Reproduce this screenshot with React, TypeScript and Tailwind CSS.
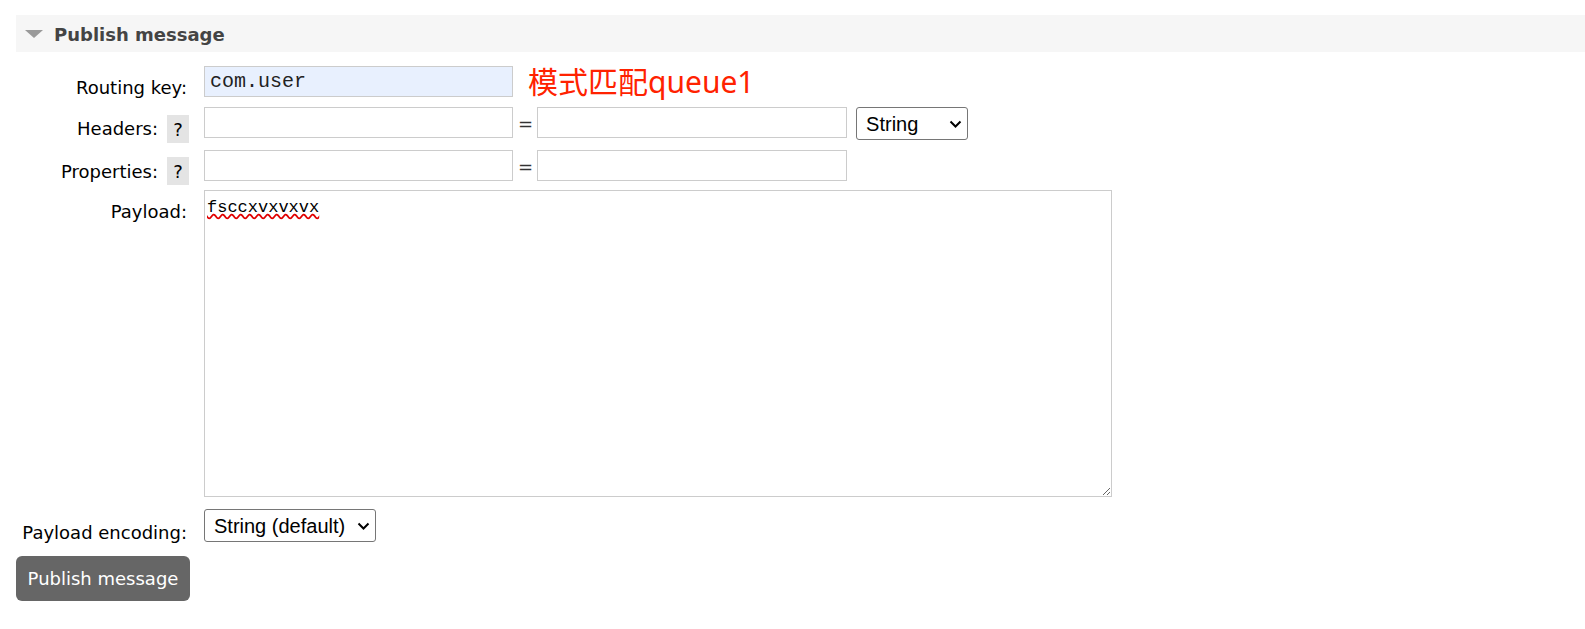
import React from "react";

function Chevron() {
  return (
    <svg width="13" height="8" viewBox="0 0 13 8" className="pointer-events-none absolute right-[6px] top-[13px]">
      <path d="M1.5 1.5 L6.5 6.5 L11.5 1.5" fill="none" stroke="#000" strokeWidth="2" />
    </svg>
  );
}

function Select({ width, options }: { width: string; options: string[] }) {
  return (
    <div className={`relative h-[33px] ${width}`}>
      <select className="h-full w-full appearance-none rounded-[3px] border border-[#767676] bg-white pl-[9px] font-[family-name:'Liberation_Sans',Arial,sans-serif] text-[20px] text-black outline-none">
        {options.map((o) => (
          <option key={o}>{o}</option>
        ))}
      </select>
      <Chevron />
    </div>
  );
}

function Help() {
  return (
    <span className="ml-[9px] mr-[1px] flex h-[28px] w-[22px] items-center justify-center bg-[#e4e4e4] text-black">?</span>
  );
}

export default function App() {
  return (
    <div className="h-[629px] w-[1585px] overflow-hidden bg-white pl-[16px] pt-[15px] font-[family-name:'DejaVu_Sans',Verdana,sans-serif] text-[18px] text-black">
      <div className="flex h-[37px] items-center bg-[#f6f6f6]">
        <svg width="18" height="8" viewBox="0 0 18 8" className="ml-[9px] mt-[1px]">
          <polygon points="0,0 18,0 9,8" fill="#9a9a9a" />
        </svg>
        <span className="ml-[11px] mt-[2px] text-[18px] font-bold text-[#444]">Publish message</span>
      </div>

      <div className="mt-[14px] flex flex-col">
        <div className="flex h-[41px]">
          <div className="w-[174px] pr-[3px] pt-[10px] text-right leading-[24px]">Routing key:</div>
          <input
            className="ml-[14px] h-[31px] w-[309px] border border-[#cccccc] bg-[#e8f0fe] px-[5px] font-[family-name:'Liberation_Mono',monospace] text-[20px] text-[#222] outline-none"
            defaultValue="com.user"
          />
          <span className="ml-[15px] mt-[1px] self-start font-[family-name:'Noto_Sans','Noto_Sans_CJK_SC',sans-serif] text-[30px] leading-[30px] text-[#ff2200]">
            模式匹配queue1
          </span>
        </div>

        <div className="flex h-[43px]">
          <div className="flex w-[174px] items-start justify-end">
            <span className="pt-[10px] leading-[24px]">Headers:</span>
            <span className="mt-[8px]">
              <Help />
            </span>
          </div>
          <input className="ml-[14px] h-[31px] w-[309px] border border-[#cccccc] bg-white outline-none" />
          <span className="ml-[5px] self-start pt-[5px] leading-[24px] text-[#333]">=</span>
          <input className="ml-[4px] h-[31px] w-[310px] border border-[#cccccc] bg-white outline-none" />
          <div className="ml-[9px]">
            <Select width="w-[112px]" options={["String", "Number", "Boolean"]} />
          </div>
        </div>

        <div className="flex h-[40px]">
          <div className="flex w-[174px] items-start justify-end">
            <span className="pt-[10px] leading-[24px]">Properties:</span>
            <span className="mt-[7px]">
              <Help />
            </span>
          </div>
          <input className="ml-[14px] h-[31px] w-[309px] border border-[#cccccc] bg-white outline-none" />
          <span className="ml-[5px] self-start pt-[5px] leading-[24px] text-[#333]">=</span>
          <input className="ml-[4px] h-[31px] w-[310px] border border-[#cccccc] bg-white outline-none" />
        </div>

        <div className="flex h-[319px]">
          <div className="w-[174px] pr-[3px] pt-[10px] text-right leading-[24px]">Payload:</div>
          <textarea
            className="ml-[14px] h-[307px] w-[908px] resize border border-[#cccccc] bg-white px-[2px] pt-[4px] font-[family-name:'Liberation_Mono',monospace] text-[17px] text-black underline decoration-[#e00000] decoration-wavy outline-none"
            defaultValue="fsccxvxvxvx"
          />
        </div>

        <div className="flex h-[47px]">
          <div className="w-[174px] pr-[3px] pt-[12px] text-right leading-[24px]">Payload encoding:</div>
          <div className="ml-[14px]">
            <Select width="w-[172px]" options={["String (default)", "Base64"]} />
          </div>
        </div>

        <div>
          <button className="h-[45px] w-[174px] rounded-[6px] bg-[#666] text-center text-[18px] text-white">
            Publish message
          </button>
        </div>
      </div>
    </div>
  );
}
